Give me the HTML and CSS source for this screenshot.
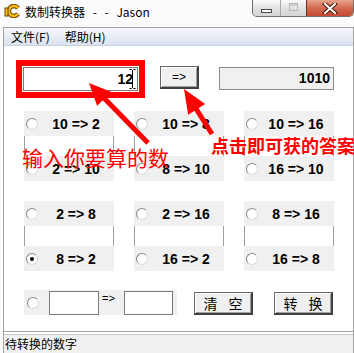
FILE: index.html
```html
<!DOCTYPE html>
<html lang="zh-CN">
<head>
    <meta charset="UTF-8">
    <title>数制转换器 - - Jason</title>
    <link rel="stylesheet" href="styles.css">
</head>
<body>
    <div class="window">
        <!-- Title bar -->
        <div class="titlebar">
            <svg class="app-icon" viewBox="0 0 16 14">
                <path d="M14 4.2 A5 5 0 1 0 14 9.8" fill="none" stroke="#6b4200" stroke-width="4.4"/>
                <path d="M14 4.2 A5 5 0 1 0 14 9.8" fill="none" stroke="#f7bc1a" stroke-width="2.4"/>
                <rect x="1" y="4" width="3" height="8" fill="#f7bc1a" stroke="#6b4200" stroke-width="1"/>
            </svg>
            <span class="title">数制转换器 - - Jason</span>
            <div class="controls">
                <span class="ctl ctl-min"><i></i></span>
                <span class="ctl ctl-max"><i></i></span>
                <span class="ctl ctl-close">
                    <svg viewBox="0 0 20 11" width="20" height="11">
                        <path d="M5 1 L15 10 M15 1 L5 10" stroke="#4a1a10" stroke-width="4" stroke-linecap="square"/>
                        <path d="M5 1 L15 10 M15 1 L5 10" stroke="#fff" stroke-width="2" stroke-linecap="square"/>
                    </svg>
                </span>
            </div>
        </div>

        <div class="frame">
            <!-- Menu -->
            <div class="menubar">
                <span class="menu-item">文件(F)</span>
                <span class="menu-item">帮助(H)</span>
            </div>

            <!-- Client area -->
            <div class="client">
                <div class="top-row">
                    <div class="mark-box">
                        <div class="field field-input">
                            12
                            <svg class="ibeam" viewBox="0 0 7 20" width="7" height="20">
                                <path d="M0.5 0.5 H2.5 L3.5 1.5 L4.5 0.5 H6.5 M3.5 1.5 V18.5 M0.5 19.5 H2.5 L3.5 18.5 L4.5 19.5 H6.5" fill="none" stroke="#000" stroke-width="1"/>
                            </svg>
                        </div>
                    </div>
                    <div class="btn btn-go">=&gt;</div>
                    <div class="field field-result">1010</div>
                </div>

                <div class="options">
                    <div class="group">
                        <div class="option"><span class="radio"></span><span class="opt-label">10 =&gt; 2</span></div>
                        <div class="option"><span class="radio"></span><span class="opt-label">2 =&gt; 10</span></div>
                    </div>
                    <div class="group">
                        <div class="option"><span class="radio"></span><span class="opt-label">10 =&gt; 8</span></div>
                        <div class="option"><span class="radio"></span><span class="opt-label">8 =&gt; 10</span></div>
                    </div>
                    <div class="group">
                        <div class="option"><span class="radio"></span><span class="opt-label">10 =&gt; 16</span></div>
                        <div class="option"><span class="radio"></span><span class="opt-label">16 =&gt; 10</span></div>
                    </div>
                    <div class="group">
                        <div class="option"><span class="radio"></span><span class="opt-label">2 =&gt; 8</span></div>
                        <div class="option"><span class="radio checked"></span><span class="opt-label">8 =&gt; 2</span></div>
                    </div>
                    <div class="group">
                        <div class="option"><span class="radio"></span><span class="opt-label">2 =&gt; 16</span></div>
                        <div class="option"><span class="radio"></span><span class="opt-label">16 =&gt; 2</span></div>
                    </div>
                    <div class="group">
                        <div class="option"><span class="radio"></span><span class="opt-label">8 =&gt; 16</span></div>
                        <div class="option"><span class="radio"></span><span class="opt-label">16 =&gt; 8</span></div>
                    </div>
                </div>

                <div class="bottom-row">
                    <div class="custom">
                        <span class="radio"></span>
                        <div class="field field-small field-from"></div>
                        <span class="arrow-label">=&gt;</span>
                        <div class="field field-small field-to"></div>
                    </div>
                    <div class="btn btn-action btn-clear">清 空</div>
                    <div class="btn btn-action btn-convert">转 换</div>
                </div>
            </div>

            <!-- Status bar -->
            <div class="statusbar">待转换的数字</div>
        </div>

        <!-- Red annotations drawn over the window -->
        <svg class="annotations" viewBox="0 0 354 353" width="354" height="353">
            <line x1="148" y1="143" x2="102" y2="96" stroke="#f00" stroke-width="5"/>
            <polygon points="89,83 111.5,91.9 97.1,105.8" fill="#f00"/>
            <line x1="212" y1="134" x2="195" y2="107" stroke="#f00" stroke-width="5"/>
            <polygon points="184,89 205.2,104.1 188.2,114.7" fill="#f00"/>
        </svg>
        <div class="note note-input">输入你要算的数</div>
        <div class="note note-result">点击即可获的答案</div>
    </div>
</body>
</html>
```

FILE: styles.css
```css
* {
    box-sizing: border-box;
}

body {
    margin: 0;
    font-family: "Noto Sans CJK SC", "Liberation Sans", sans-serif;
    color: #000;
}

/* Window */
.window {
    position: relative;
    width: 354px;
    height: 353px;
    display: flex;
    flex-direction: column;
    background: #fbfbfb;
    overflow: hidden;
}

.titlebar {
    height: 27px;
    display: flex;
    align-items: flex-start;
    flex: none;
}

.app-icon {
    width: 16px;
    height: 14px;
    margin: 4px 0 0 4px;
}

.title {
    margin: 4px 0 0 5px;
    font-size: 12px;
    line-height: 16px;
    word-spacing: 5px;
}

.controls {
    margin-left: auto;
    display: flex;
    height: 17px;
    border: 1px solid #6f6f6f;
    border-top: none;
    border-radius: 0 0 5px 5px;
    overflow: hidden;
}

.ctl {
    display: flex;
    align-items: center;
    justify-content: center;
    height: 100%;
    background: linear-gradient(#fafafa, #e2e2e2 50%, #d4d4d4);
}

.ctl-min {
    width: 27px;
}

.ctl-min i {
    width: 11px;
    height: 4px;
    margin-top: 5px;
    background: #fff;
    border: 1px solid #4a4a4a;
}

.ctl-max {
    width: 26px;
    border-left: 1px solid #a8a8a8;
}

.ctl-max i {
    width: 9px;
    height: 8px;
    margin-top: -2px;
    border: 1px solid #b8b8b8;
    box-shadow: inset 0 2px #d0d0d0;
}

.ctl-close {
    width: 47px;
    border-left: 1px solid #7a3020;
    background: linear-gradient(#e9a48f, #d46a52 50%, #c44a32);
}

/* Frame */
.frame {
    flex: 1;
    display: flex;
    flex-direction: column;
    margin-left: 3px;
    border-top: 1px solid #a3a3a3;
    border-left: 1px solid #a3a3a3;
    border-right: 1px solid #a3a3a3;
}

.menubar {
    height: 18px;
    flex: none;
    display: flex;
    font-size: 12px;
    line-height: 17px;
    padding-left: 7px;
    background: linear-gradient(#f6f8fc, #dae2f0);
    border-bottom: 1px solid #c9d2e2;
}

.menu-item {
    margin-right: 15px;
}

.client {
    flex: 1;
    background: #fff;
    display: flex;
    flex-direction: column;
}

/* Top row */
.top-row {
    display: flex;
    align-items: flex-start;
    margin: 14px 0 0 12px;
}

.mark-box {
    width: 129px;
    height: 38px;
    border: 6px solid #f00;
    padding: 1px;
}

.field {
    position: relative;
    background: #fff;
    border: 1px solid #7a7a7a;
    font-family: "Liberation Sans", sans-serif;
    font-weight: 700;
    font-size: 14px;
    text-align: right;
}

.field-input {
    height: 24px;
    line-height: 22px;
    padding-right: 4px;
}

.ibeam {
    position: absolute;
    right: 1px;
    top: 1px;
}

.btn {
    display: flex;
    align-items: center;
    justify-content: center;
    background: #f0f0f0;
    border: 1px solid #6a6a6a;
    border-right: 2px solid #404040;
    border-bottom: 2px solid #404040;
    box-shadow: inset 1px 1px #fff, inset -1px -1px #a0a0a0;
    font-size: 12px;
}

.btn-go {
    width: 39px;
    height: 23px;
    margin: 6px 0 0 15px;
    font-family: "Liberation Sans", sans-serif;
}

.field-result {
    width: 115px;
    height: 23px;
    margin: 7px 0 0 20px;
    background: #f0f0f0;
    border-color: #8a8a8a;
    line-height: 21px;
    padding-right: 3px;
}

/* Radio options */
.options {
    display: grid;
    grid-template-columns: repeat(3, 90px);
    gap: 20px;
    margin: 13px 0 0 20px;
}

.group {
    height: 70px;
    display: flex;
    flex-direction: column;
    justify-content: space-between;
    border-left: 1px solid #a0a0a0;
    border-right: 1px solid #a0a0a0;
}

.option {
    height: 25px;
    margin: 0 -1px;
    display: flex;
    align-items: center;
    padding-left: 2px;
    background: #f0f0f0;
}

.radio {
    position: relative;
    flex: none;
    width: 12px;
    height: 12px;
    border-radius: 50%;
    border: 1px solid;
    border-color: #8a8a8a #dcdcdc #dcdcdc #8a8a8a;
    background: #fff;
}

.radio.checked::after {
    content: "";
    position: absolute;
    left: 3px;
    top: 3px;
    width: 4px;
    height: 4px;
    border-radius: 50%;
    background: #000;
}

.opt-label {
    flex: 1;
    text-align: center;
    font-family: "Liberation Sans", sans-serif;
    font-weight: 700;
    font-size: 14px;
}

/* Bottom row */
.bottom-row {
    display: flex;
    align-items: flex-end;
    margin: 19px 0 0 20px;
}

.custom {
    width: 153px;
    height: 25px;
    display: flex;
    align-items: center;
    padding-left: 3px;
    background: #f0f0f0;
}

.field-small {
    height: 24px;
    align-self: flex-end;
}

.field-from {
    width: 50px;
    margin-left: 10px;
}

.arrow-label {
    margin: 0 9px 0 3px;
    font-family: "Liberation Sans", sans-serif;
    font-size: 11px;
    align-self: flex-start;
    line-height: 16px;
}

.field-to {
    width: 49px;
}

.btn-action {
    width: 59px;
    height: 23px;
    font-size: 14px;
    letter-spacing: 4px;
    padding-left: 4px;
}

.btn-clear {
    margin-left: 17px;
}

.btn-convert {
    margin-left: 21px;
}

/* Status bar */
.statusbar {
    height: 22px;
    flex: none;
    font-size: 12px;
    line-height: 18px;
    padding: 3px 0 0 1px;
    background: #f0f0f0;
    border-top: 1px solid #a0a0a0;
    box-shadow: inset 0 2px #fff, inset 0 3px #c8c8c8;
}

/* Annotations */
.annotations {
    position: absolute;
    left: 0;
    top: 0;
    pointer-events: none;
}

.note {
    position: absolute;
    color: #f00;
    white-space: nowrap;
}

.note-input {
    left: 22px;
    top: 147px;
    font-size: 21px;
    line-height: 21px;
}

.note-result {
    left: 211px;
    top: 136px;
    font-size: 18px;
    line-height: 18px;
    font-weight: 700;
}
```
